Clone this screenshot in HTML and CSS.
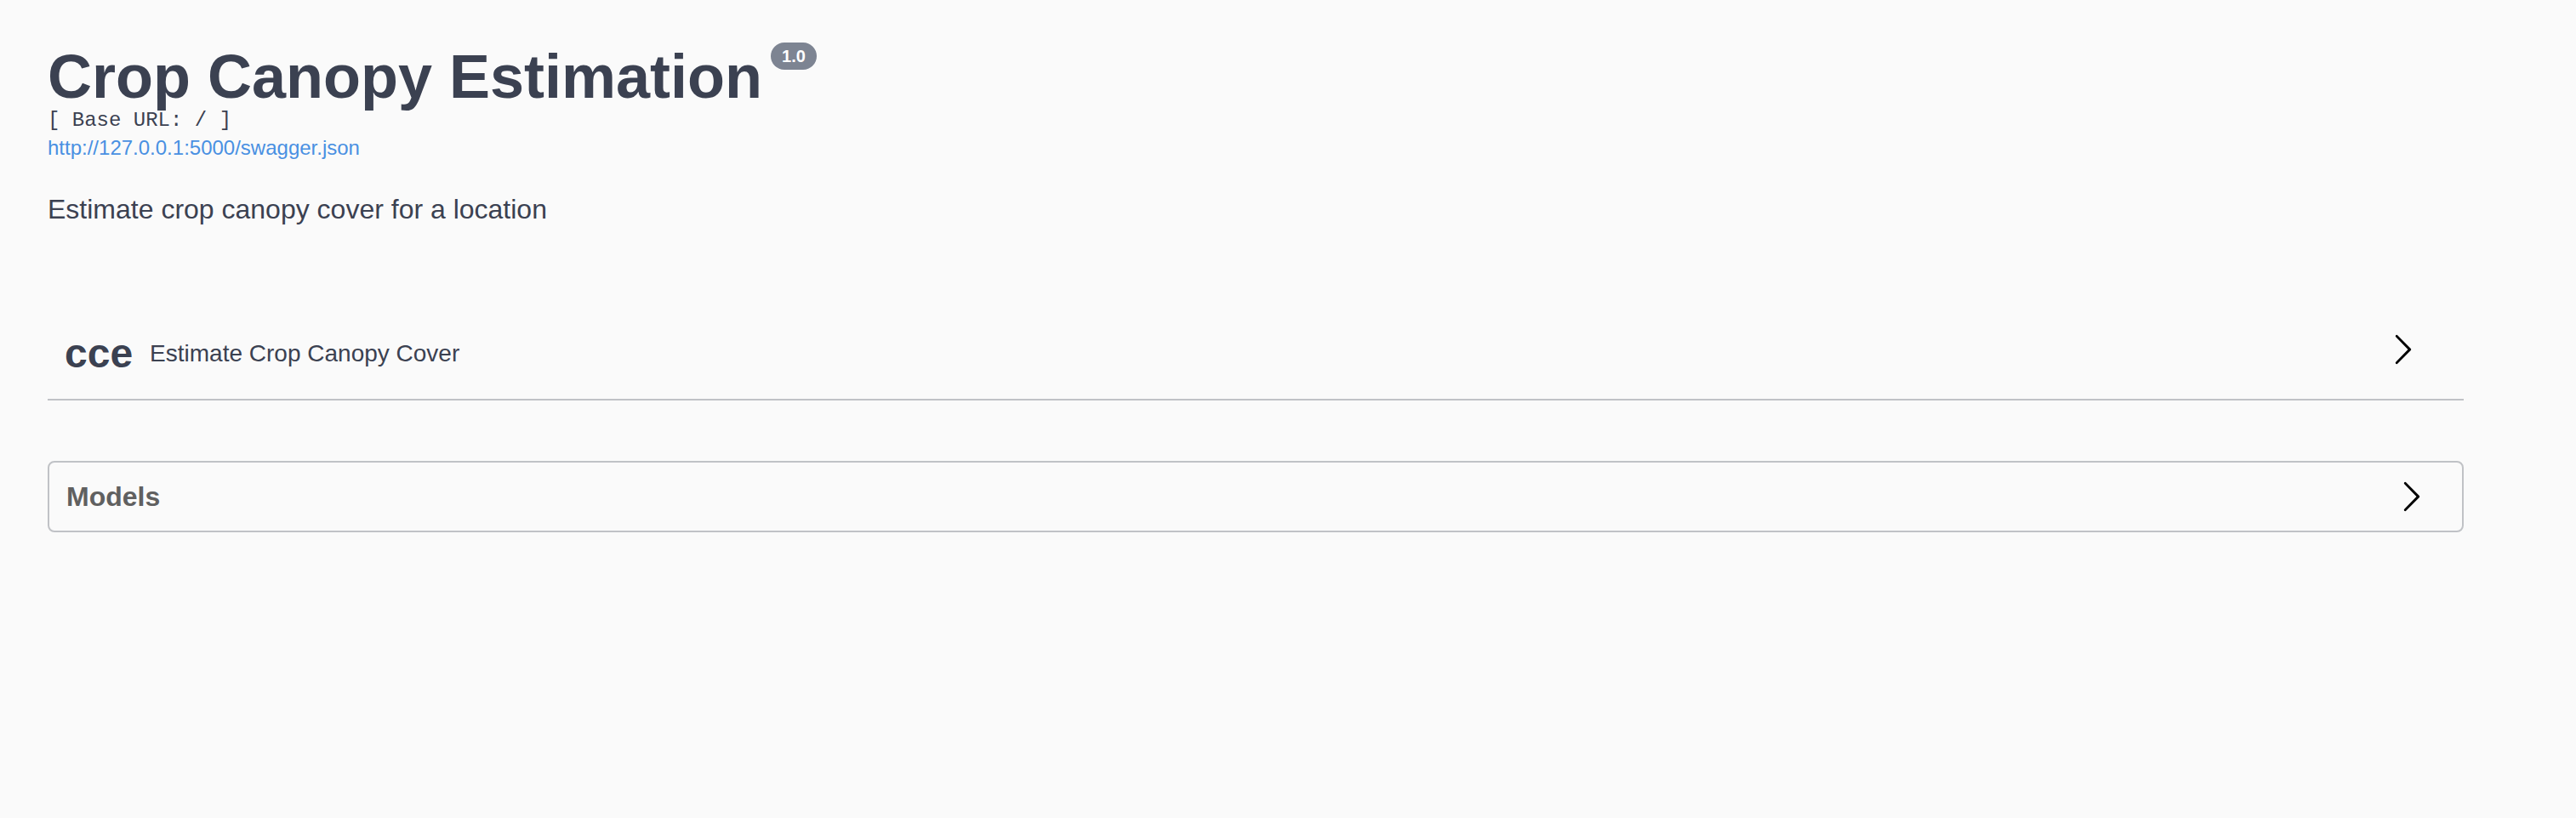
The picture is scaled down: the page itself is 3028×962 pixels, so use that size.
FILE: index.html
```html
<!DOCTYPE html>
<html lang="en">
<head>
<meta charset="utf-8">
<title>Crop Canopy Estimation</title>
<link rel="stylesheet" href="styles.css">
</head>
<body>
<div class="wrapper">
  <div class="info">
    <h2 class="title">Crop Canopy Estimation<small class="version">1.0</small></h2>
    <pre class="base-url">[ Base URL: / ]</pre>
    <a class="spec-link" href="#">http://127.0.0.1:5000/swagger.json</a>
    <p class="description">Estimate crop canopy cover for a location</p>
  </div>

  <div class="tag-section">
    <div class="opblock-tag">
      <h3 class="tag-name">cce</h3>
      <span class="tag-desc">Estimate Crop Canopy Cover</span>
      <svg class="arrow tag-arrow" width="40" height="40" viewBox="0 0 20 20"><path d="M13.25 10L6.109 2.58a.697.697 0 0 1 0-.979.68.68 0 0 1 .969 0l7.83 7.908a.697.697 0 0 1 0 .979l-7.83 7.908a.68.68 0 0 1-.969 0 .697.697 0 0 1 0-.979L13.25 10z"/></svg>
    </div>
  </div>

  <section class="models">
    <h4 class="models-title">
      <span class="models-label">Models</span>
      <svg class="arrow" width="40" height="40" viewBox="0 0 20 20"><path d="M13.25 10L6.109 2.58a.697.697 0 0 1 0-.979.68.68 0 0 1 .969 0l7.83 7.908a.697.697 0 0 1 0 .979l-7.83 7.908a.68.68 0 0 1-.969 0 .697.697 0 0 1 0-.979L13.25 10z"/></svg>
    </h4>
  </section>
</div>
</body>
</html>
```

FILE: styles.css
```css
html, body {
  margin: 0;
  padding: 0;
  background: #fafafa;
}

body {
  font-family: "Liberation Sans", Arial, Helvetica, sans-serif;
  color: #3b4151;
}

.wrapper {
  width: 2840px;
  padding-left: 56px;
  box-sizing: content-box;
}

.info {
  padding-top: 50px;
}

.title {
  margin: 0;
  font-size: 72px;
  line-height: 80px;
  font-weight: 700;
  color: #3b4151;
  white-space: nowrap;
}

.version {
  display: inline-block;
  vertical-align: top;
  margin: 0 0 0 10px;
  padding: 4px 13px 4px 13px;
  border-radius: 57px;
  background: #7d8492;
  color: #ffffff;
  font-size: 20px;
  line-height: 24px;
  font-weight: 700;
}

.base-url {
  margin: 0;
  font-family: "Liberation Mono", "Courier New", monospace;
  font-size: 24px;
  line-height: 24px;
  font-weight: 300;
  color: #3b4151;
}

.spec-link {
  display: block;
  margin-top: 6px;
  font-size: 24px;
  line-height: 28px;
  color: #4990e2;
  text-decoration: none;
}

.description {
  margin: 38px 0 0 0;
  font-size: 32px;
  line-height: 40px;
  color: #3b4151;
}

.tag-section {
  margin-top: 97px;
}

.opblock-tag {
  display: flex;
  align-items: center;
  padding: 25px 52px 25px 20px;
  border-bottom: 2px solid rgba(59, 65, 81, 0.3);
}

.tag-name {
  margin: 0;
  font-size: 48px;
  line-height: 56px;
  font-weight: 700;
  color: #3b4151;
}

.tag-desc {
  flex: 1;
  padding: 0 20px;
  font-size: 28px;
  line-height: 32px;
  color: #3b4151;
}

.arrow {
  display: block;
  flex: none;
  fill: #000000;
}

.tag-arrow {
  margin-bottom: 11px;
}

.models {
  margin-top: 71px;
  border: 2px solid rgba(59, 65, 81, 0.3);
  border-radius: 8px;
}

.models-title {
  display: flex;
  align-items: center;
  margin: 0;
  padding: 20px 40px 20px 20px;
  font-size: 32px;
  line-height: 37px;
  font-weight: 700;
  color: #606060;
}

.models-label {
  flex: 1;
}
```
